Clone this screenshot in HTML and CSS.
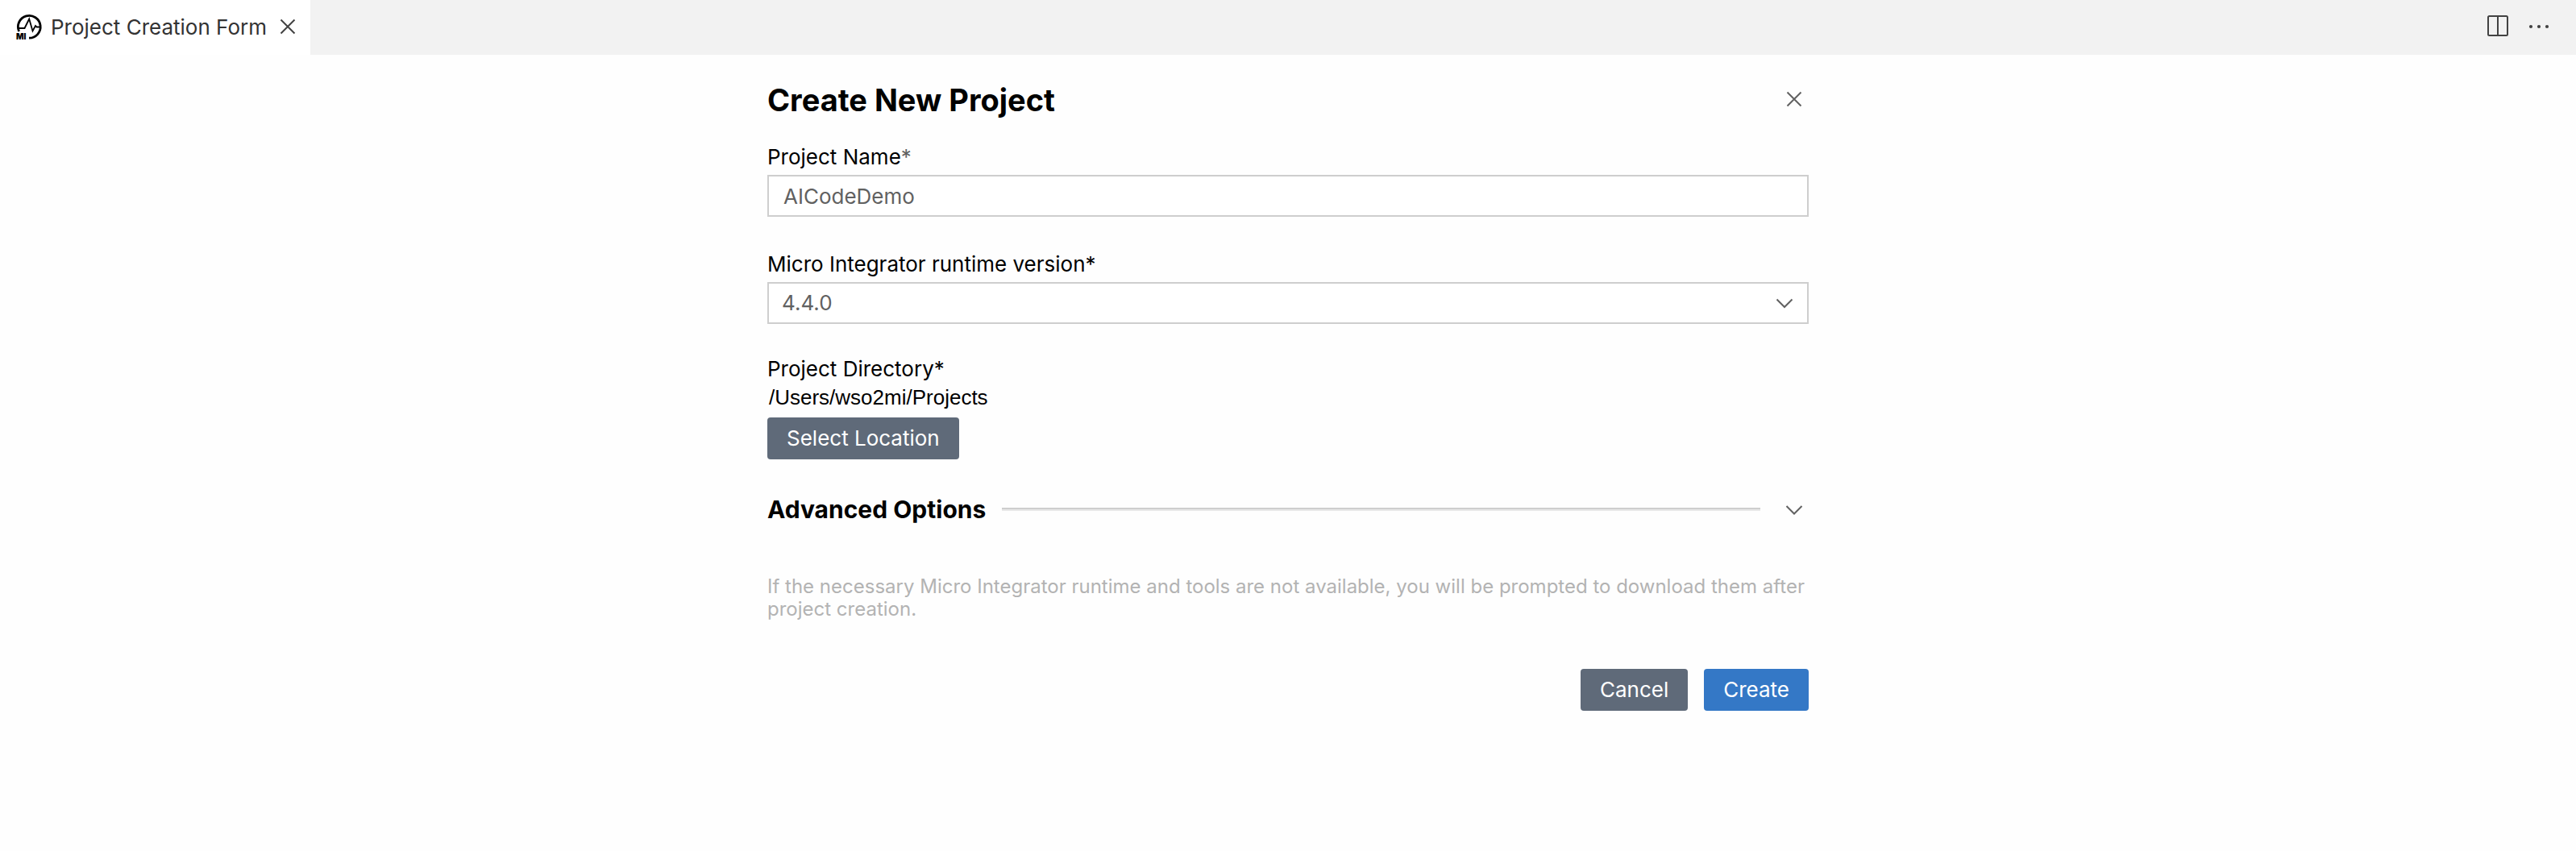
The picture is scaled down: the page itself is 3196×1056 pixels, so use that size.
FILE: index.html
```html
<!DOCTYPE html>
<html lang="en">
<head>
<meta charset="utf-8">
<meta name="viewport" content="width=device-width, initial-scale=1">
<title>Project Creation Form</title>
<link rel="stylesheet" href="styles.css">
</head>
<body>
<header class="tab-bar">
  <div class="tab">
    <svg class="logo" viewBox="0 0 32 32" aria-hidden="true">
      <path d="M3.600 21A13.900 13.900 0 1 1 16 29.200" fill="none" stroke="#000" stroke-width="2.800"/>
      <path d="M3 17H10.500L13 12L16.200 5.500L20.500 20.500L24 14L25.500 15.500H30" fill="none" stroke="#000" stroke-width="1.800"/>
      <text class="logo-text" x="0" y="31">MI</text>
    </svg>
    <span class="tab-title">Project Creation Form</span>
    <button class="icon-button" type="button" aria-label="Close tab">
      <svg class="icon icon-close" viewBox="0 0 32 32"><path d="M7.500 6.500L24.500 23.500M24.500 6.500L7.500 23.500"/></svg>
    </button>
  </div>
  <div class="tab-actions">
    <button class="icon-button" type="button" aria-label="Split editor">
      <svg class="icon" viewBox="0 0 32 32"><rect x="3" y="2" width="24" height="24" rx="1.500"/><path d="M15 2V26"/></svg>
    </button>
    <button class="icon-button" type="button" aria-label="More actions">
      <svg class="icon icon-dots" viewBox="0 0 32 32"><circle cx="6" cy="15" r="2.100"/><circle cx="16" cy="15" r="2.100"/><circle cx="26" cy="15" r="2.100"/></svg>
    </button>
  </div>
</header>
<main class="form-page">
  <form class="form">
    <div class="title-row">
      <h1 class="title">Create New Project</h1>
      <button class="icon-button muted" type="button" aria-label="Close form">
        <svg class="icon" viewBox="0 0 32 32"><path d="M7.500 6.500L24.500 23.500M24.500 6.500L7.500 23.500"/></svg>
      </button>
    </div>
    <div class="field">
      <label class="label" for="project-name">Project Name<span class="required">*</span></label>
      <input class="control" id="project-name" type="text" value="AICodeDemo">
    </div>
    <div class="field">
      <label class="label" for="runtime-version">Micro Integrator runtime version*</label>
      <div class="select-wrap">
        <select class="control select" id="runtime-version"><option>4.4.0</option></select>
        <svg class="icon select-icon" viewBox="0 0 32 32"><path d="M6.500 11.500L16 21L25.500 11.500"/></svg>
      </div>
    </div>
    <div class="directory">
      <label class="label" for="select-location">Project Directory*</label>
      <div class="path">/Users/wso2mi/Projects</div>
      <button class="button" id="select-location" type="button">Select Location</button>
    </div>
    <div class="advanced">
      <h2 class="advanced-title">Advanced Options</h2>
      <hr class="rule">
      <button class="icon-button muted" type="button" aria-label="Expand advanced options">
        <svg class="icon" viewBox="0 0 32 32"><path d="M6.500 12L16 21.500L25.500 12"/></svg>
      </button>
    </div>
    <p class="note">If the necessary Micro Integrator runtime and tools are not available, you will be prompted to download them after project creation.</p>
    <div class="actions">
      <button class="button" type="button">Cancel</button>
      <button class="button primary" type="submit">Create</button>
    </div>
  </form>
</main>
</body>
</html>
```
FILE: styles.css
```css
* {
  box-sizing: border-box;
}

body {
  margin: 0;
  background: #fefefe;
  color: #000;
  font: 26px/32px Inter, "Liberation Sans", sans-serif;
}

.tab-bar {
  display: flex;
  justify-content: space-between;
  height: 68px;
  background: #f2f2f2;
}

.tab {
  display: flex;
  align-items: center;
  padding: 0 12px 0 20px;
  background: #fff;
  color: #333;
}

.tab-title {
  margin: 0 10px 0 11px;
}

.logo {
  width: 32px;
  height: 32px;
  flex: none;
  overflow: visible;
}

.logo-text {
  font: 900 10px Inter, sans-serif;
}

.tab-actions {
  display: flex;
  align-items: center;
  gap: 18px;
  padding-right: 30px;
}

.icon-button {
  display: flex;
  flex: none;
  padding: 0;
  border: 0;
  background: none;
  color: #424242;
}

.muted {
  color: #616161;
}

.icon {
  width: 32px;
  height: 32px;
  fill: none;
  stroke: currentColor;
  stroke-width: 2;
}

.icon-dots {
  fill: currentColor;
  stroke: none;
}

.form-page {
  padding: 32px 24px;
}

.form {
  max-width: 1292px;
  margin: 0 auto;
}

.title-row {
  display: flex;
  align-items: center;
  justify-content: space-between;
  height: 48px;
  margin-bottom: 31px;
  padding-right: 2px;
}

.title {
  margin: 0;
  font-size: 38px;
  line-height: 48px;
  font-weight: 700;
}

.field {
  display: flex;
  flex-direction: column;
  gap: 6px;
}

.field + .field {
  margin-top: 43px;
}

.directory {
  margin-top: 40px;
}

.label {
  display: block;
}

.required {
  color: #616161;
}

.control {
  width: 100%;
  height: 52px;
  padding: 0 18px;
  border: 2px solid #cecece;
  border-radius: 0;
  background: #fff;
  color: #616161;
  font: inherit;
  appearance: none;
}

.select {
  padding: 0 16px;
}

.select-wrap {
  position: relative;
}

.select-icon {
  position: absolute;
  top: 10px;
  right: 14px;
  color: #616161;
  pointer-events: none;
}

.path {
  margin: 3px 0 9px 2px;
  font: 26px/32px "Liberation Sans", sans-serif;
}

.button {
  height: 52px;
  padding: 0 24px;
  border: 0;
  border-radius: 4px;
  background: #5f6a79;
  color: #fff;
  font: inherit;
}

.primary {
  background: #3478c6;
}

.advanced {
  display: flex;
  align-items: center;
  height: 40px;
  margin: 42px 0 62px;
  padding-right: 2px;
}

.advanced-title {
  margin: 0;
  font-size: 30px;
  line-height: 40px;
}

.rule {
  flex: 1;
  height: 4px;
  margin: 0 26px 0 20px;
  border: solid;
  border-width: 2px 0;
  border-color: #cecece #e8e8e8 #e8e8e8;
}

.note {
  margin: 0 0 60px;
  color: #b3b3b3;
  font-size: 24px;
  line-height: 28px;
}

.actions {
  display: flex;
  justify-content: flex-end;
  gap: 20px;
}
```
